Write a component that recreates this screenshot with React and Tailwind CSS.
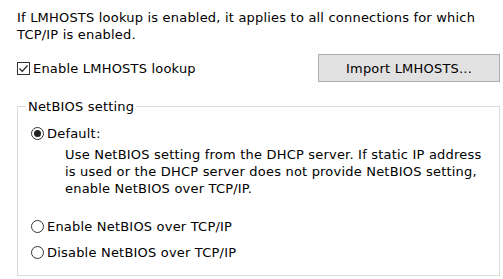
import React from "react";

const Radio = ({ checked }) => (
  <span className="w-[13px] h-[13px] rounded-full border border-[#333] bg-white flex items-center justify-center shrink-0">
    {checked && <span className="w-[7px] h-[7px] rounded-full bg-[#222]" />}
  </span>
);

export default function App() {
  return (
    <div
      className="w-[503px] h-[279px] bg-white text-[13px] leading-[17px] tracking-[0.2px] text-black pl-[17px] pr-[3px] pt-[9px] overflow-hidden whitespace-nowrap"
      style={{ fontFamily: "'DejaVu Sans', sans-serif" }}
    >
      <p>
        If LMHOSTS lookup is enabled, it applies to all connections for which
        <br />
        TCP/IP is enabled.
      </p>

      <div className="flex items-center justify-between mt-[11px] h-[28px]">
        <label className="flex items-center gap-[3px]">
          <span className="w-[13px] h-[13px] border border-[#333] bg-white flex items-center justify-center">
            <svg width="11" height="11" viewBox="0 0 11 11">
              <path d="M1.5 5.5 L4.3 8.3 L9.5 2.5" fill="none" stroke="#222" strokeWidth="1.2" />
            </svg>
          </span>
          <span>Enable LMHOSTS lookup</span>
        </label>
        <button className="w-[182px] h-[28px] bg-[#e1e1e1] border border-[#adadad] text-[13px] tracking-[0.2px]">
          Import LMHOSTS...
        </button>
      </div>

      <fieldset className="mt-[16px] border border-[#dcdcdc] h-[178px] pl-[13px] pr-[2px]">
        <legend className="px-[2px] ml-[-5px]">NetBIOS setting</legend>
        <div className="flex items-center gap-[3px] mt-[10px]">
          <Radio checked />
          <span>Default:</span>
        </div>
        <p className="pl-[34px] mt-[4px]">
          Use NetBIOS setting from the DHCP server. If static IP address
          <br />
          is used or the DHCP server does not provide NetBIOS setting,
          <br />
          enable NetBIOS over TCP/IP.
        </p>
        <div className="flex items-center gap-[3px] mt-[21px]">
          <Radio />
          <span>Enable NetBIOS over TCP/IP</span>
        </div>
        <div className="flex items-center gap-[3px] mt-[9px]">
          <Radio />
          <span>Disable NetBIOS over TCP/IP</span>
        </div>
      </fieldset>
    </div>
  );
}
